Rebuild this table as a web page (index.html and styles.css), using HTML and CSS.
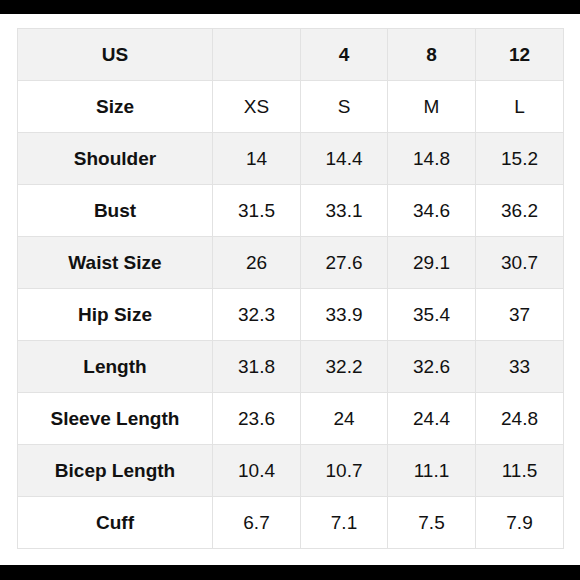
FILE: index.html
```html
<!DOCTYPE html>
<html>
<head>
<meta charset="utf-8">
<link rel="stylesheet" href="styles.css">
</head>
<body>
<div class="bar"></div>
<div class="sheet">
<table class="chart">
<colgroup><col class="c0"><col class="c1"><col class="c2"><col class="c3"><col class="c4"></colgroup>
<tr class="alt"><th>US</th><td></td><th>4</th><th>8</th><th>12</th></tr>
<tr><th>Size</th><td>XS</td><td>S</td><td>M</td><td>L</td></tr>
<tr class="alt"><th>Shoulder</th><td>14</td><td>14.4</td><td>14.8</td><td>15.2</td></tr>
<tr><th>Bust</th><td>31.5</td><td>33.1</td><td>34.6</td><td>36.2</td></tr>
<tr class="alt"><th>Waist Size</th><td>26</td><td>27.6</td><td>29.1</td><td>30.7</td></tr>
<tr><th>Hip Size</th><td>32.3</td><td>33.9</td><td>35.4</td><td>37</td></tr>
<tr class="alt"><th>Length</th><td>31.8</td><td>32.2</td><td>32.6</td><td>33</td></tr>
<tr><th>Sleeve Length</th><td>23.6</td><td>24</td><td>24.4</td><td>24.8</td></tr>
<tr class="alt"><th>Bicep Length</th><td>10.4</td><td>10.7</td><td>11.1</td><td>11.5</td></tr>
<tr><th>Cuff</th><td>6.7</td><td>7.1</td><td>7.5</td><td>7.9</td></tr>
</table>
</div>
<div class="bar bottom"></div>
</body>
</html>
```
FILE: styles.css
```css
html, body {
  margin: 0;
  padding: 0;
  background: #fff;
}
body {
  width: 580px;
  height: 580px;
  overflow: hidden;
  font-family: "Liberation Sans", Arial, Helvetica, sans-serif;
}
.bar {
  height: 14px;
  background: #000;
}
.bar.bottom {
  height: 15px;
}
.sheet {
  height: 551px;
  padding: 14px 0 0 17px;
  box-sizing: border-box;
}
.chart {
  border-collapse: collapse;
  table-layout: fixed;
  width: 546px;
}
.c0 { width: 195px; }
.c1 { width: 88px; }
.c2 { width: 87px; }
.c3 { width: 88px; }
.c4 { width: 88px; }
.chart th, .chart td {
  border: 1px solid #e2e2e2;
  height: 52px;
  padding: 0;
  text-align: center;
  vertical-align: middle;
  font-size: 19px;
  color: #111;
  box-sizing: border-box;
}
.chart th {
  font-weight: bold;
}
.chart td {
  font-weight: normal;
}
.chart tr.alt th, .chart tr.alt td {
  background: #f2f2f2;
}
```
